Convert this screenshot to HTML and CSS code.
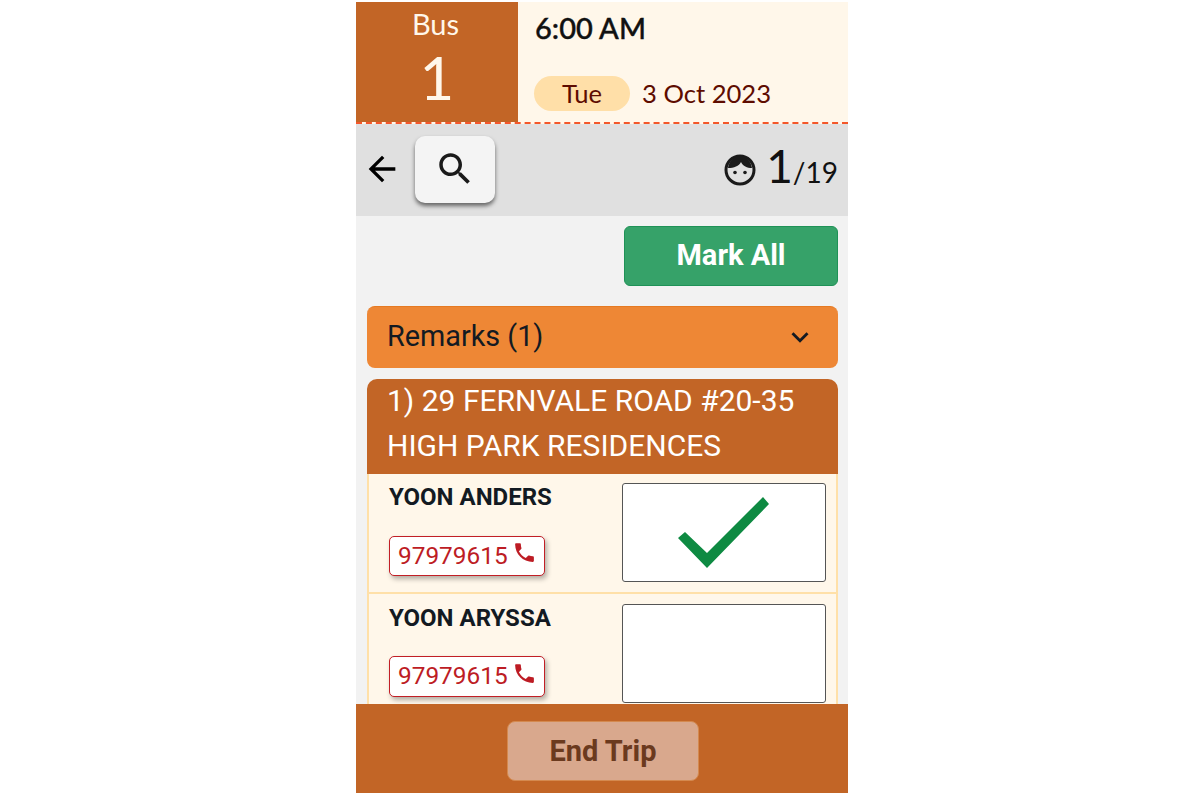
FILE: index.html
```html
<!DOCTYPE html>
<html>

	<head>
		<meta charset="UTF-8">
		<title>Bus 1 attendance</title>
		<link rel="stylesheet" href="styles.css">
	</head>

	<body>
		<div class="app">
			<header class="trip">
				<div class="bus">
					<span class="bus-label">Bus</span>
					<span class="bus-no">1</span>
				</div>
				<div class="when">
					<div class="time">6:00 AM</div>
					<div class="date-row">
						<span class="day">Tue</span>
						<span class="date">3 Oct 2023</span>
					</div>
				</div>
			</header>

			<div class="toolbar">
				<svg class="back" viewBox="0 0 24 24"><path d="M20 11H7.83l5.59-5.59L12 4l-8 8 8 8 1.41-1.41L7.83 13H20v-2z"/></svg>
				<button class="search">
					<svg viewBox="0 0 24 24"><path d="M15.5 14h-.79l-.28-.27C15.41 12.59 16 11.11 16 9.5 16 5.91 13.09 3 9.5 3S3 5.91 3 9.5 5.91 16 9.5 16c1.61 0 3.09-.59 4.23-1.57l.27.28v.79l5 4.99L20.49 19l-4.99-5zm-6 0C7.01 14 5 11.99 5 9.5S7.01 5 9.5 5 14 7.01 14 9.5 11.99 14 9.5 14z"/></svg>
				</button>
				<div class="count">
					<svg class="face" viewBox="0 0 32 32">
						<circle cx="16" cy="16" r="14" fill="none" stroke="#1a1a1a" stroke-width="3"/>
						<path d="M4 14C5 7 10 2 16 2s11 5 12 12c-5 0-9-2-11-6-2 4-7 6-13 6z" fill="#1a1a1a"/>
						<circle cx="11" cy="18.5" r="1.8" fill="#1a1a1a"/>
						<circle cx="21" cy="18.5" r="1.8" fill="#1a1a1a"/>
					</svg>
					<span class="count-now">1</span><span class="count-all">/19</span>
				</div>
			</div>

			<main class="content">
				<div class="actions">
					<button class="mark-all">Mark All</button>
				</div>

				<div class="remarks">
					<span>Remarks (1)</span>
					<svg viewBox="0 0 24 24"><path d="M16.59 8.59L12 13.17 7.41 8.59 6 10l6 6 6-6z"/></svg>
				</div>

				<section class="stop">
					<h2 class="stop-title">1) 29 FERNVALE ROAD #20-35<br>HIGH PARK RESIDENCES</h2>
					<div class="rider">
						<div class="rider-info">
							<div class="rider-name">YOON ANDERS</div>
							<a class="phone" href="javascript:;">97979615
								<svg viewBox="0 0 24 24"><path d="M6.62 10.79c1.44 2.83 3.76 5.14 6.59 6.59l2.2-2.2c.27-.27.67-.36 1.02-.24 1.12.37 2.33.57 3.57.57.55 0 1 .45 1 1V20c0 .55-.45 1-1 1-9.39 0-17-7.61-17-17 0-.55.45-1 1-1h3.5c.55 0 1 .45 1 1 0 1.25.2 2.45.57 3.57.11.35.03.74-.25 1.02l-2.2 2.2z"/></svg>
							</a>
						</div>
						<div class="tick-box">
							<svg viewBox="0 0 91 71"><polygon points="0,41 7,35 29,56 85,0 91,7 29,71"/></svg>
						</div>
					</div>
					<div class="rider">
						<div class="rider-info">
							<div class="rider-name">YOON ARYSSA</div>
							<a class="phone" href="javascript:;">97979615
								<svg viewBox="0 0 24 24"><path d="M6.62 10.79c1.44 2.83 3.76 5.14 6.59 6.59l2.2-2.2c.27-.27.67-.36 1.02-.24 1.12.37 2.33.57 3.57.57.55 0 1 .45 1 1V20c0 .55-.45 1-1 1-9.39 0-17-7.61-17-17 0-.55.45-1 1-1h3.5c.55 0 1 .45 1 1 0 1.25.2 2.45.57 3.57.11.35.03.74-.25 1.02l-2.2 2.2z"/></svg>
							</a>
						</div>
						<div class="tick-box"></div>
					</div>
				</section>
			</main>

			<footer class="bottom">
				<button class="end-trip">End Trip</button>
			</footer>
		</div>
	</body>

</html>
```

FILE: styles.css
```css
* {
	margin: 0;
	padding: 0;
	box-sizing: border-box;
}

body {
	background: #fff;
	font-family: Roboto, "Liberation Sans", sans-serif;
	overflow: hidden;
}

.app {
	width: 492px;
	height: 793px;
	margin-left: 356px;
	padding-top: 2px;
	display: flex;
	flex-direction: column;
}

/* trip header */
.trip {
	height: 122px;
	display: flex;
	background: #fff7ea;
	border-bottom: 2px dashed #f4572a;
	font-family: Lato, "Liberation Sans", sans-serif;
}

.bus {
	width: 162px;
	height: 120px;
	display: flex;
	flex-direction: column;
	align-items: center;
	background: #c26526;
	color: #fff7ea;
}

.bus-label {
	font-size: 29px;
	line-height: 32px;
	margin: 6px 3px 0 0;
}

.bus-no {
	font-size: 60px;
	line-height: 70px;
	margin-top: 2px;
}

.when {
	flex: 1;
	padding: 9px 0 0 17px;
}

.time {
	font-size: 29px;
	line-height: 34px;
	font-weight: 500;
	color: #111;
	-webkit-text-stroke: 0.4px #111;
}

.date-row {
	display: flex;
	align-items: center;
	margin-top: 31px;
	color: #5e0c00;
	font-size: 25.6px;
}

.day {
	width: 96px;
	height: 35px;
	line-height: 35px;
	margin-left: -1px;
	margin-right: 12px;
	text-align: center;
	border-radius: 18px;
	background: #ffdfa8;
}

.date {
	margin-top: -2px;
}

/* toolbar */
.toolbar {
	height: 92px;
	display: flex;
	align-items: center;
	background: #e0e0e0;
	padding: 0 10px 0 6px;
}

.back {
	width: 40px;
	height: 40px;
	margin-top: -2px;
}

.search {
	width: 80px;
	height: 67px;
	margin: -2px 0 0 13px;
	border: 0;
	border-radius: 10px;
	background: #f4f4f4;
	box-shadow: 0 3px 4px rgba(0, 0, 0, 0.55);
	display: flex;
	align-items: center;
	justify-content: center;
}

.search svg {
	width: 42px;
	height: 42px;
	fill: #1a1a1a;
}

.count {
	margin-left: auto;
	margin-top: -9px;
	display: flex;
	align-items: baseline;
	font-family: Lato, "Liberation Sans", sans-serif;
	color: #111;
}

.face {
	width: 32px;
	height: 32px;
	align-self: center;
	margin: 8px 10px 0 0;
}

.count-now {
	font-size: 46px;
	line-height: 54px;
}

.count-all {
	font-size: 28px;
}

/* scrolling area */
.content {
	flex: 1;
	overflow: hidden;
	background: #f2f2f2;
	padding: 10px 10px 0 11px;
}

.actions {
	display: flex;
	justify-content: flex-end;
}

.mark-all {
	width: 214px;
	height: 60px;
	padding-bottom: 2px;
	border: 1px solid #1f9257;
	border-radius: 6px;
	background: #36a269;
	color: #fff;
	font-family: inherit;
	font-size: 29px;
	font-weight: 700;
}

.remarks {
	height: 62px;
	margin-top: 20px;
	padding: 0 21px 3px 20px;
	display: flex;
	align-items: center;
	justify-content: space-between;
	background: #ee8735;
	border-top: 1px solid #e67a22;
	border-radius: 8px;
	color: #131a22;
	font-size: 28.8px;
}

.remarks svg {
	width: 34px;
	height: 34px;
	margin-top: 1px;
	fill: #131a22;
}

.stop {
	margin-top: 11px;
}

.stop-title {
	height: 95px;
	padding: 0 20px;
	background: #c26526;
	border-radius: 10px 10px 0 0;
	color: #fff;
	font-size: 30px;
	font-weight: 400;
	line-height: 44.5px;
}

.rider {
	height: 120px;
	display: flex;
	justify-content: space-between;
	padding: 9px 10px 0 20px;
	background: #fff7ea;
	border: 2px solid #ffe0a8;
	border-width: 0 2px 2px;
}

.rider + .rider {
	padding-top: 10px;
}

.rider-name {
	font-size: 24px;
	line-height: 28px;
	font-weight: 700;
	color: #131a22;
}

.phone {
	width: 156px;
	height: 40px;
	margin-top: 25px;
	display: flex;
	align-items: center;
	padding: 0 0 2px 8px;
	gap: 6px;
	background: #fff;
	border: 1px solid #c21f26;
	border-radius: 5px;
	box-shadow: 2px 3px 5px rgba(0, 0, 0, 0.3);
	color: #bd1c24;
	font-size: 24.4px;
	text-decoration: none;
}

.rider + .rider .phone {
	height: 41px;
	margin-top: 24px;
}

.phone svg {
	width: 25px;
	height: 25px;
	margin: -5px 0 0 -2px;
	fill: #bd1c24;
}

.tick-box {
	width: 204px;
	height: 99px;
	display: flex;
	align-items: center;
	justify-content: center;
	background: #fff;
	border: 1px solid #555;
	border-radius: 3px;
}

.tick-box svg {
	width: 91px;
	height: 71px;
	margin-right: 2px;
	fill: #0e8a42;
}

/* footer */
.bottom {
	height: 89px;
	display: flex;
	justify-content: center;
	padding: 17px 0 0 2px;
	background: #c26526;
}

.end-trip {
	width: 192px;
	height: 60px;
	border: 1px solid #d4894f;
	border-radius: 8px;
	background: #d9a88d;
	color: #6b3a1e;
	font-family: inherit;
	font-size: 29px;
	font-weight: 700;
}
```
